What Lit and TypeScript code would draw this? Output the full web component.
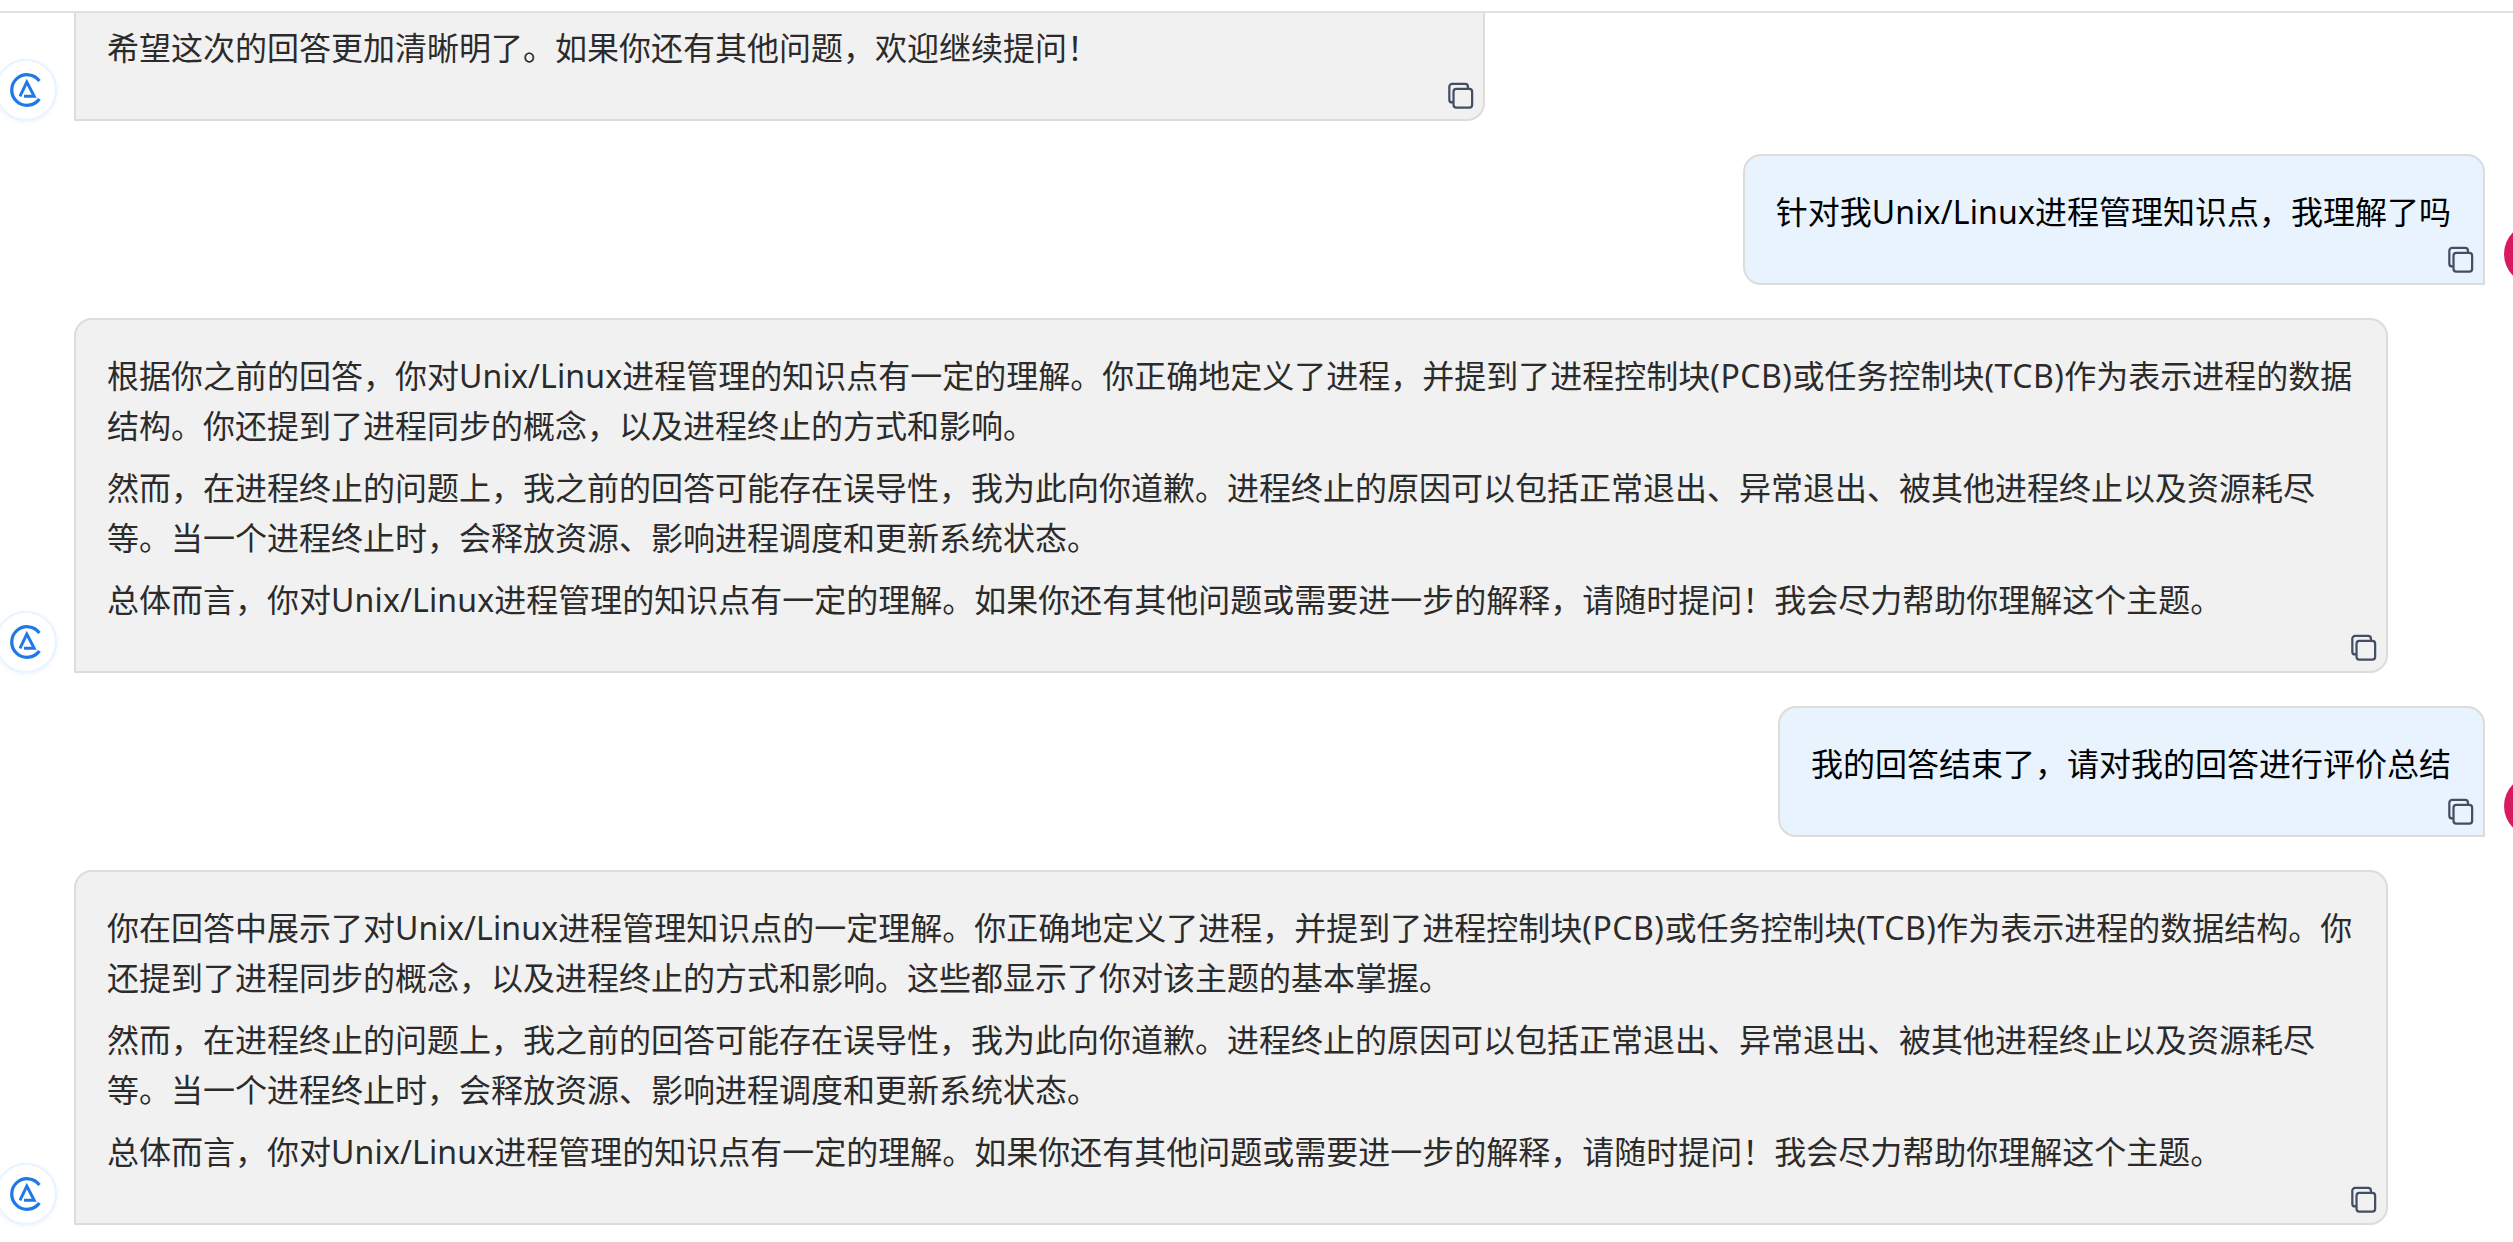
import { LitElement, html, css, svg } from "lit";
import { customElement } from "lit/decorators.js";

const copyIcon = html`<svg class="copy" width="27" height="27" viewBox="0 0 29 29" fill="none" stroke="#434e63" stroke-width="2.4">
  <path d="M7 22h-1.5a3 3 0 0 1-3-3V5a3 3 0 0 1 3-3h14a3 3 0 0 1 3 3v2" />
  <rect x="7" y="7.5" width="20" height="20" rx="3" />
</svg>`;

const logo = html`<svg width="36" height="36" viewBox="0 0 36 36" fill="none" stroke="#1f7ae8">
  ${svg`<path d="M31.4 9A15.3 15.3 0 1 0 31.4 27" stroke-width="3.3" />
  <path d="M12 24.3L18.8 10L26.2 24.3H16" stroke-width="3" />`}
</svg>`;

const p1 = [
  "然而，在进程终止的问题上，我之前的回答可能存在误导性，我为此向你道歉。进程终止的原因可以包括正常退出、异常退出、被其他进程终止以及资源耗尽",
  "等。当一个进程终止时，会释放资源、影响进程调度和更新系统状态。",
];
const p2 = [
  "总体而言，你对Unix/Linux进程管理的知识点有一定的理解。如果你还有其他问题或需要进一步的解释，请随时提问！我会尽力帮助你理解这个主题。",
];

interface Msg {
  role: "ai" | "user";
  cls?: string;
  paras: string[][];
}

const messages: Msg[] = [
  { role: "ai", cls: "first", paras: [["希望这次的回答更加清晰明了。如果你还有其他问题，欢迎继续提问！"]] },
  { role: "user", paras: [["针对我Unix/Linux进程管理知识点，我理解了吗"]] },
  {
    role: "ai",
    cls: "wide",
    paras: [
      [
        "根据你之前的回答，你对Unix/Linux进程管理的知识点有一定的理解。你正确地定义了进程，并提到了进程控制块(PCB)或任务控制块(TCB)作为表示进程的数据",
        "结构。你还提到了进程同步的概念，以及进程终止的方式和影响。",
      ],
      p1,
      p2,
    ],
  },
  { role: "user", paras: [["我的回答结束了，请对我的回答进行评价总结"]] },
  {
    role: "ai",
    cls: "wide",
    paras: [
      [
        "你在回答中展示了对Unix/Linux进程管理知识点的一定理解。你正确地定义了进程，并提到了进程控制块(PCB)或任务控制块(TCB)作为表示进程的数据结构。你",
        "还提到了进程同步的概念，以及进程终止的方式和影响。这些都显示了你对该主题的基本掌握。",
      ],
      p1,
      p2,
    ],
  },
];

const runs = (line: string) =>
  line.split(/(\([A-Z]+\)|Unix\/Linux)/).map((part) =>
    part.startsWith("(")
      ? html`<span class="caps">${part}</span>`
      : part.startsWith("Unix")
        ? html`<span class="lat">${part}</span>`
        : part
  );

@customElement("app-root")
export class AppRoot extends LitElement {
  static styles = css`
    :host {
      display: block;
      width: 2513px;
      height: 1242px;
      overflow: hidden;
      background: #fff;
      font-family: "Noto Sans", "Noto Sans CJK SC", sans-serif;
      font-size: 32px;
      line-height: 50px;
      color: #2b2b2b;
    }
    .top {
      height: 11px;
      border-bottom: 2px solid #e0e0e0;
    }
    .list {
      height: 1229px;
      overflow: hidden;
      display: flex;
      flex-direction: column;
      gap: 33px;
    }
    .msg {
      display: flex;
      align-items: flex-end;
      flex: none;
    }
    .msg.ai {
      gap: 17px;
      margin-left: -5px;
    }
    .msg.user {
      justify-content: flex-end;
      gap: 19px;
      margin-right: -53px;
    }
    .avatar {
      flex: none;
      width: 62px;
      height: 62px;
      border-radius: 50%;
      box-sizing: border-box;
      display: flex;
      align-items: center;
      justify-content: center;
    }
    .ai .avatar {
      background: #fff;
      border: 2px solid #eaf4ff;
      box-shadow: 0 1px 4px rgba(30, 120, 230, 0.08);
    }
    .user .avatar {
      background: #d81b60;
    }
    .bubble {
      position: relative;
      box-sizing: border-box;
      border: 2px solid #dcdcdc;
      padding: 31px 32px 46px 31px;
      white-space: nowrap;
    }
    .ai .bubble {
      background: #f1f1f1;
      border-radius: 18px 18px 18px 0;
    }
    .user .bubble {
      background: #e8f3fe;
      color: #000;
      border-radius: 18px 18px 0 18px;
    }
    .first .bubble {
      width: 1411px;
      height: 108px;
      padding-top: 10px;
      border-top: none;
      border-radius: 0 0 18px 0;
    }
    .wide .bubble {
      width: 2314px;
    }
    p {
      margin: 0 0 12px;
    }
    p:last-of-type {
      margin-bottom: 0;
    }
    .lat {
      letter-spacing: 0.15px;
    }
    .caps {
      letter-spacing: 0.5px;
    }
    .copy {
      position: absolute;
      right: 9px;
      bottom: 10px;
      display: block;
    }
  `;

  render() {
    return html`
      <div class="top"></div>
      <div class="list">
        ${messages.map(
          (m) => html`
            <div class="msg ${m.role} ${m.cls ?? ""}">
              ${m.role === "ai" ? html`<div class="avatar">${logo}</div>` : ""}
              <div class="bubble">
                ${m.paras.map((lines) => html`<p>${lines.map((l, i) => html`${i ? html`<br />` : ""}${runs(l)}`)}</p>`)}
                ${copyIcon}
              </div>
              ${m.role === "user" ? html`<div class="avatar"></div>` : ""}
            </div>
          `
        )}
      </div>
    `;
  }
}
